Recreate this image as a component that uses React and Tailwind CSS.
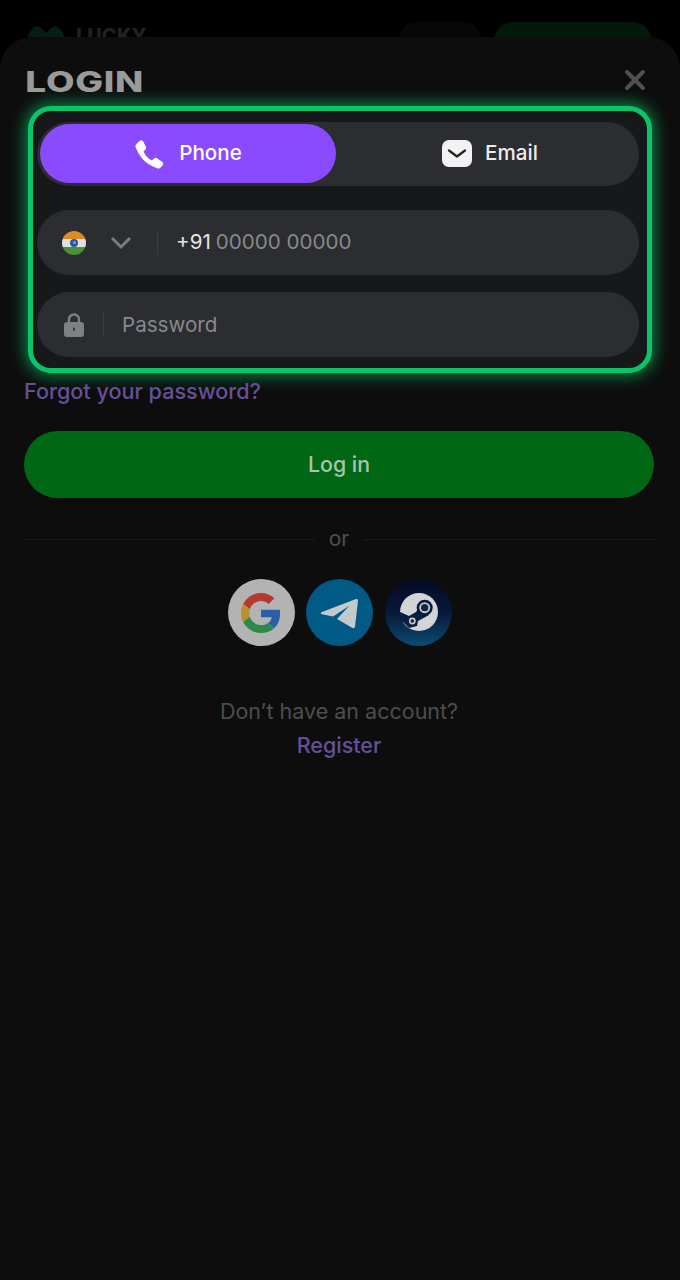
import { X } from 'lucide-react'

const font = { fontFamily: 'Inter' }

function PhoneIcon() {
  return (
    <svg viewBox="0 0 30 30" className="w-[30px] h-[30px] shrink-0">
      <path fill="#ffffff" d="M5 2.500 Q7 0.500 9 2 L12 8 Q12.500 10 11 11 L9.500 12.500 Q11 16 13.500 18.500 Q15.500 20.500 18 21.500 L20 19.500 Q21 18.500 22.500 19 L28.500 23 Q30 24.500 28.500 26.500 L26 29 Q24.500 30 22.500 29 Q14 26 8.500 20 Q3.500 14 1.500 8 Q1 6 2.500 5 Z" />
    </svg>
  )
}

function GoogleIcon() {
  return (
    <svg viewBox="0 0 48 48" className="w-[40px] h-[40px]">
      <path fill="#b5392c" d="M24 9.500c3.500 0 6.700 1.200 9.200 3.600l6.900-6.900C35.900 2.400 30.500 0 24 0 14.600 0 6.500 5.400 2.600 13.200l8 6.200C12.500 13.700 17.800 9.500 24 9.500z" />
      <path fill="#2d5fa8" d="M46.900 24.500c0-1.600-.1-3.100-.4-4.500H24v9h12.900c-.6 3-2.200 5.500-4.700 7.200l7.700 6c4.500-4.200 7-10.300 7-17.700z" />
      <path fill="#b8922a" d="M10.600 28.600c-.5-1.500-.8-3-.8-4.600s.3-3.100.8-4.600l-8-6.200C.9 16.500 0 20.100 0 24s.9 7.500 2.600 10.800l8-6.200z" />
      <path fill="#2e8a47" d="M24 48c6.500 0 11.900-2.100 15.900-5.800l-7.700-6c-2.200 1.400-4.900 2.300-8.200 2.300-6.200 0-11.500-4.200-13.400-9.900l-8 6.200C6.500 42.600 14.600 48 24 48z" />
    </svg>
  )
}

function TelegramIcon() {
  return (
    <svg viewBox="0 0 67 67" className="w-[67px] h-[67px]">
      <path fill="#c4c9cc" d="M15 35 Q14 34 16 33 L50 20 Q52.500 19.500 52 22 L49 47.500 Q48.500 50 46.500 49 L31 40 L43 27 L27 37.500 Z" />
    </svg>
  )
}

function SteamIcon() {
  return (
    <svg viewBox="0 0 67 67" className="w-[67px] h-[67px]">
      <circle cx="34" cy="33" r="19" fill="#d2d4d6" />
      <path fill="#08203f" d="M13 32 L24 37 L31 33 L36 25 L44 36 L33 42 L32 47 L24 49 L15 40 Z" />
      <circle cx="39.700" cy="28.700" r="8" fill="#08193a" />
      <circle cx="39.700" cy="28.700" r="5.500" fill="#c4c6c9" />
      <circle cx="39.700" cy="28.700" r="3.600" fill="#14233f" />
      <circle cx="27.300" cy="42" r="3.400" fill="#c4c6c9" />
      <circle cx="27.300" cy="42" r="1.800" fill="#14233f" />
    </svg>
  )
}

function FlagIcon() {
  return (
    <div className="w-[24px] h-[24px] rounded-full overflow-hidden flex flex-col shrink-0">
      <div className="h-[8px] bg-[#e08a22]" />
      <div className="h-[8px] bg-[#e0e0e0] flex items-center justify-center">
        <div className="w-[8px] h-[8px] rounded-full bg-[#27579c] flex items-center justify-center">
          <div className="w-[3px] h-[3px] rounded-full bg-[#7fa3d4]" />
        </div>
      </div>
      <div className="h-[8px] bg-[#4e8f3a]" />
    </div>
  )
}

function LockIcon() {
  return (
    <svg viewBox="0 0 20 24" className="w-[20px] h-[24px] shrink-0">
      <path fill="none" stroke="#7f8083" strokeWidth="2.400" d="M5 11V6.500a5 5 0 0 1 10 0V11" />
      <rect x="0" y="9" width="20" height="15" rx="3" fill="#7f8083" />
      <rect x="9.200" y="14.500" width="1.600" height="3.500" rx="0.800" fill="#2b2d31" />
    </svg>
  )
}

export default function App() {
  return (
    <div className="w-[680px] h-[1280px] bg-black overflow-hidden flex flex-col" style={font}>
      {/* Dimmed header behind the sheet */}
      <div className="h-[37px] shrink-0 overflow-hidden flex items-start pl-[25px] pr-[28px] pt-[22px]">
        <div className="flex items-center gap-[9px]">
          <svg viewBox="0 0 42 24" className="w-[42px] h-[24px]">
            <path fill="#052012" d="M0 24 Q2 12 8 6 Q13 2 17 7 L21 11 L25 7 Q29 2 34 6 Q40 12 42 24 Z" />
          </svg>
          <span className="text-[20px] leading-none font-extrabold text-[#222222] pt-[4px]">LUCKY</span>
        </div>
        <div className="ml-auto w-[84px] h-[40px] rounded-[20px] bg-[#070707]" />
        <div className="ml-[12px] w-[158px] h-[40px] rounded-[20px] bg-[#031a0b]" />
      </div>

      {/* Sheet */}
      <div className="flex-1 bg-[#0d0d0d] rounded-t-[32px] pl-[24px] pr-[26px] pt-[24px]">
        <div className="flex items-center justify-between h-[45px] pr-[3px] pb-[3px]">
          <h1 className="text-[28px] leading-none font-extrabold text-[#9a9a9a] pl-[1px] tracking-[0.02em] origin-left scale-x-[1.32]">LOGIN</h1>
          <X className="w-[32px] h-[32px] mb-[4px] text-[#505050]" strokeWidth={3} />
        </div>

        <div className="ml-[4px] mr-[2px] h-[267px] box-border border-[5px] border-[#0cc468] rounded-[23px] bg-[#16181a] shadow-[0_0_16px_3px_rgba(12,196,104,0.65)] pt-[11px] pl-[4px] pr-[8px]">
          <div className="h-[64px] rounded-[32px] bg-[#2b2d31] flex items-start pt-[2px] pl-[3px]">
            <div className="w-[296px] h-[59px] rounded-[30px] bg-[#8a4bff] flex items-center justify-center gap-[15px] text-white text-[20.600px] font-medium">
              <PhoneIcon />
              <span>Phone</span>
            </div>
            <div className="flex-1 h-[59px] flex items-center justify-center gap-[13px] pl-[5px] text-[#ececec] text-[20.600px] font-medium">
              <svg viewBox="0 0 30 27" className="w-[30px] h-[27px]">
                <rect width="30" height="27" rx="7" fill="#f2f2f2" />
                <path d="M7 10.500 L15 16.500 L23 10.500" fill="none" stroke="#222" strokeWidth="2.200" strokeLinecap="round" strokeLinejoin="round" />
              </svg>
              <span>Email</span>
            </div>
          </div>

          <div className="mt-[24px] h-[65px] rounded-[32px] bg-[#2b2d31] flex items-center pl-[25px]">
            <FlagIcon />
            <svg viewBox="0 0 22 14" className="w-[22px] h-[14px] ml-[24px]">
              <path d="M2 2 L11 11 L20 2" fill="none" stroke="#7a7b7e" strokeWidth="3" />
            </svg>
            <div className="w-px h-[24px] bg-[#3c3e42] ml-[25px]" />
            <span className="ml-[18px] text-[20.600px] text-[#e4e4e4]">+91</span>
            <span className="ml-[5px] text-[20.600px] text-[#88898b]">00000 00000</span>
          </div>

          <div className="mt-[17px] h-[65px] rounded-[32px] bg-[#2b2d31] flex items-center pl-[27px]">
            <LockIcon />
            <div className="w-px h-[24px] bg-[#3c3e42] ml-[19px]" />
            <span className="ml-[18px] pt-[2px] text-[20.600px] text-[#88898b]">Password</span>
          </div>
        </div>

        <div className="mt-[5px] text-[21.600px] leading-[26px] font-medium text-[#67509a]">Forgot your password?</div>

        <div className="mt-[27px] h-[67px] rounded-[34px] bg-[#006815] flex items-center justify-center text-[21.300px] font-medium text-[#a9c4ad]">
          Log in
        </div>

        <div className="mt-[28px] flex items-center gap-[14px] text-[21px] text-[#4f4f4f]">
          <div className="flex-1 h-px bg-[#1a1a1a]" />
          <span className="leading-[26px]">or</span>
          <div className="flex-1 h-px bg-[#1a1a1a]" />
        </div>

        <div className="mt-[27px] pl-[1px] flex justify-center gap-[11.500px]">
          <div className="w-[67px] h-[67px] rounded-full bg-[#b3b3b3] flex items-center justify-center"><GoogleIcon /></div>
          <div className="w-[67px] h-[67px] rounded-full bg-[#005a85] flex items-center justify-center"><TelegramIcon /></div>
          <div className="w-[67px] h-[67px] rounded-full bg-gradient-to-b from-[#050c24] via-[#07183a] to-[#0b4d73] flex items-center justify-center">
            <SteamIcon />
          </div>
        </div>

        <div className="mt-[48px] flex flex-col items-center text-[21.500px] leading-[34px]">
          <span className="text-[#4d4d4d]">Don’t have an account?</span>
          <span className="font-medium text-[#67509a]">Register</span>
        </div>
      </div>
    </div>
  )
}
